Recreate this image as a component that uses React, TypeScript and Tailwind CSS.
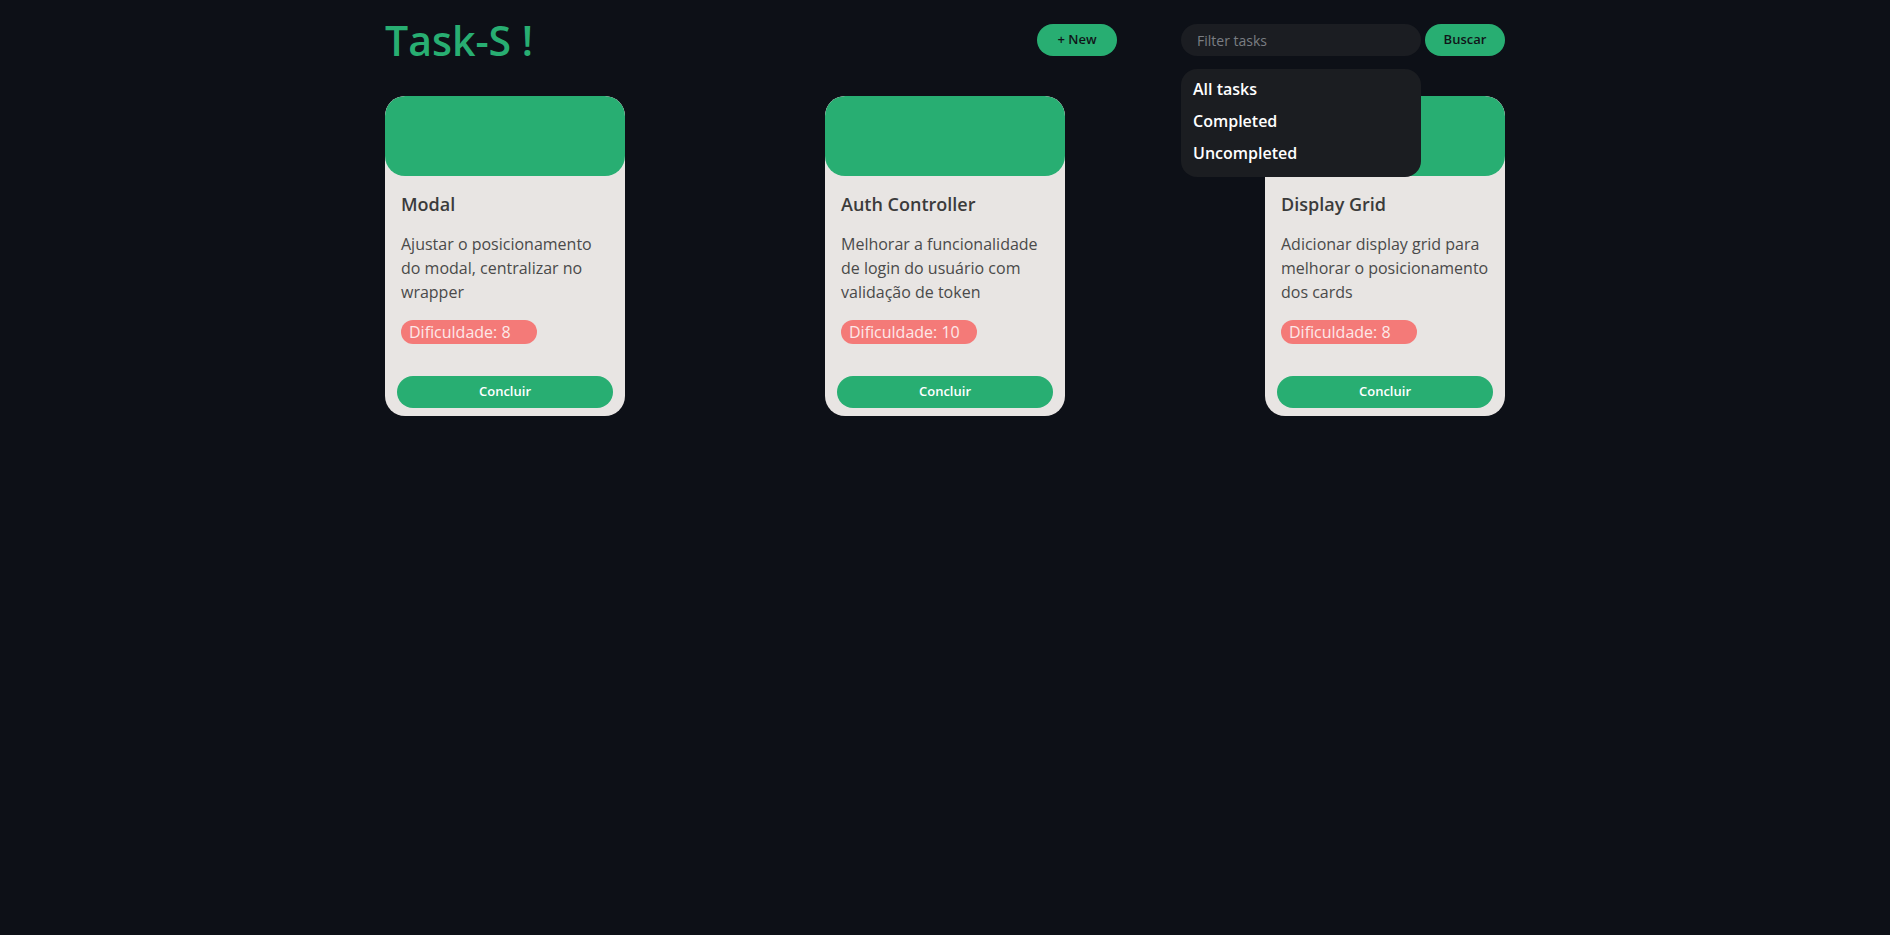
import React from 'react'

interface Task {
    id: number
    title: string
    description: string
    difficulty: number
}

const tasks: Task[] = [
    { id: 1, title: 'Modal', description: 'Ajustar o posicionamento do modal, centralizar no wrapper', difficulty: 8 },
    { id: 2, title: 'Auth Controller', description: 'Melhorar a funcionalidade de login do usuário com validação de token', difficulty: 10 },
    { id: 3, title: 'Display Grid', description: 'Adicionar display grid para melhorar o posicionamento dos cards', difficulty: 8 },
]

function TaskCard({ task }: { task: Task }) {
    return (
        <div className="w-[240px] h-[320px] bg-[#e8e5e3] rounded-[20px] flex flex-col overflow-hidden">
            <div className="h-[80px] bg-[#28ae72] rounded-[20px] shrink-0" />
            <div className="px-4 pt-[14px]">
                <h2 className="text-lg leading-7 font-semibold text-[#3b3b3b]">{task.title}</h2>
                <p className="mt-[14px] text-base leading-6 text-[#4a4a4a]">{task.description}</p>
                <div className="mt-4 w-[136px] h-6 rounded-full bg-[#f47a78] px-2 flex items-center text-base text-[#fde8e8]">
                    Dificuldade: {task.difficulty}
                </div>
            </div>
            <button className="mt-auto mx-3 mb-2 h-8 rounded-full bg-[#28ae72] text-[13px] font-semibold text-white">
                Concluir
            </button>
        </div>
    )
}

export default function App() {
    return (
        <div className="min-h-screen bg-[#0d1017] font-['Open_Sans',sans-serif]">
            <div className="max-w-[1120px] mx-auto pt-6">

                {/* Header */}
                <header className="h-8 flex items-center">
                    <h1 className="text-[41px] leading-8 font-semibold text-[#28ae72]">Task-S !</h1>
                    <div className="ml-auto flex items-center gap-16">
                        <button className="w-20 h-8 rounded-full bg-[#28ae72] text-[13px] font-semibold text-[#101418]">+ New</button>
                        <div className="relative flex items-center gap-1">
                            <input
                                type="text"
                                placeholder="Filter tasks"
                                className="w-[240px] h-8 rounded-full bg-[#1b1d22] px-4 text-sm text-gray-200 outline-none placeholder:text-[#7a7d83]"
                            />
                            <button className="w-20 h-8 rounded-full bg-[#28ae72] text-[13px] font-semibold text-[#101418]">Buscar</button>

                            {/* Filter menu */}
                            <div className="absolute left-0 top-[45px] w-[240px] bg-[#1b1d21] rounded-2xl pt-1 pb-2 z-10">
                                <div className="h-8 px-3 flex items-center text-base font-semibold text-white">All tasks</div>
                                <div className="h-8 px-3 flex items-center text-base font-semibold text-white">Completed</div>
                                <div className="h-8 px-3 flex items-center text-base font-semibold text-white">Uncompleted</div>
                            </div>
                        </div>
                    </div>
                </header>

                {/* Cards */}
                <main className="mt-10 flex justify-between">
                    {tasks.map(task => <TaskCard key={task.id} task={task} />)}
                </main>
            </div>
        </div>
    )
}
